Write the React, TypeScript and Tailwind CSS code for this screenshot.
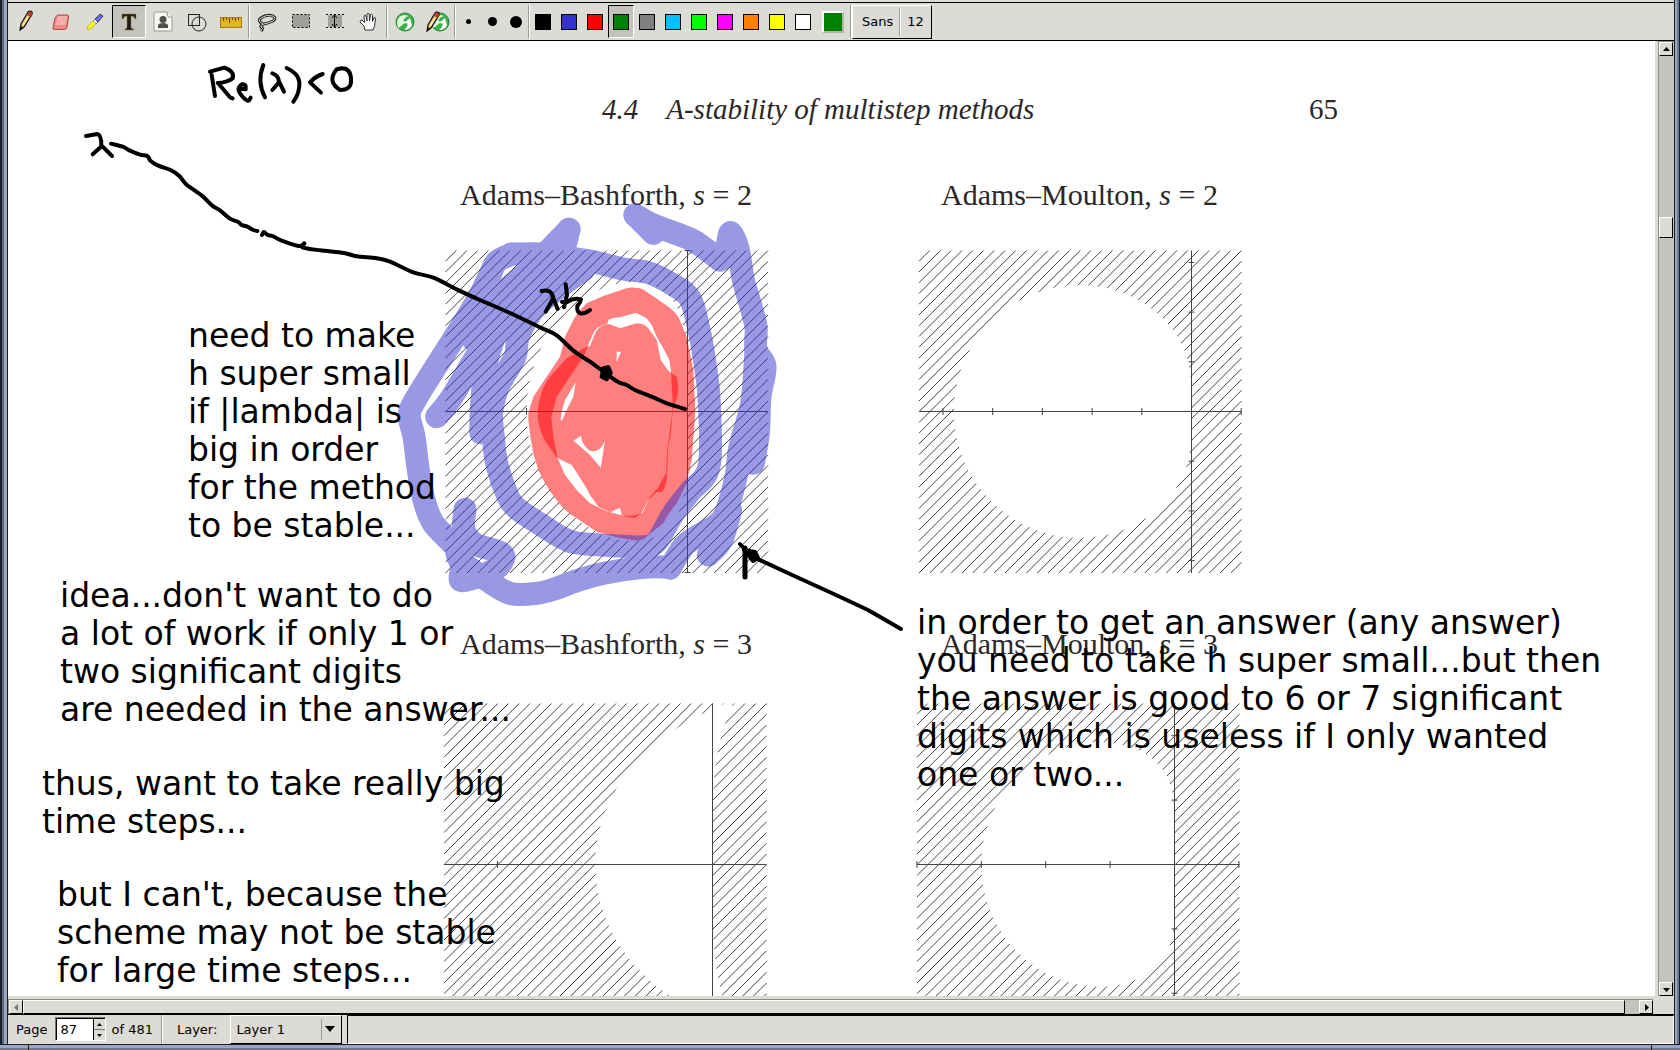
import React from "react";

type Pt = [number, number];

const mul = (a: Pt, b: Pt): Pt => [a[0] * b[0] - a[1] * b[1], a[0] * b[1] + a[1] * b[0]];
const div = (a: Pt, b: Pt): Pt => {
  const d = b[0] * b[0] + b[1] * b[1];
  return [(a[0] * b[0] + a[1] * b[1]) / d, (a[1] * b[0] - a[0] * b[1]) / d];
};
const poly = (c: number[], w: Pt): Pt =>
  c.reduce<Pt>((acc, k) => {
    const m = mul(acc, w);
    return [m[0] + k, m[1]];
  }, [0, 0]);

/* Boundary locus rho(w)/sigma(w) of a linear multistep method, |w| = 1. */
function locus(rho: number[], sigma: number[], ox: number, oy: number, unit: number) {
  const pts: string[] = [];
  for (let i = 0; i < 360; i++) {
    const t = (i * Math.PI) / 180;
    const w: Pt = [Math.cos(t), Math.sin(t)];
    const z = div(poly(rho, w), poly(sigma, w));
    pts.push(`${(ox + z[0] * unit).toFixed(2)},${(oy - z[1] * unit).toFixed(2)}`);
  }
  return pts.join(" ");
}

interface PlotProps {
  id: string;
  x: number;
  y: number;
  ox: number;
  oy: number;
  unit: number;
  curveUnit?: number;
  rho: number[];
  sigma: number[];
  xt: number[];
  yt: number[];
}

function Plot({ id, x, y, ox, oy, unit, curveUnit = unit, rho, sigma, xt, yt }: PlotProps) {
  const size = 322.5;
  const step = size / 30;
  const lines = Array.from({ length: 59 }, (_, i) => (i + 1) * step);
  return (
    <g stroke="#444" strokeWidth="1">
      <clipPath id={id}>
        <rect x={x} y={y - 1} width={size} height={size + 1} />
      </clipPath>
      {lines.map((s) => {
        const a = Math.min(s, size);
        const b = Math.max(0, s - size);
        return <line key={s} x1={x + b} y1={y + a} x2={x + a} y2={y + b} />;
      })}
      <polygon points={locus(rho, sigma, ox, oy, curveUnit)} fill="#fff" stroke="none" clipPath={`url(#${id})`} />
      <path d={`M${x} ${oy}h${size}M${ox} ${y}v${size}`} />
      {xt.map((t) => (
        <path key={t} d={`M${ox + t * unit} ${oy - 3.5}v7`} />
      ))}
      {yt.map((t) => (
        <path key={t} d={`M${ox - 3} ${oy - t * unit}h6`} />
      ))}
    </g>
  );
}

/* A pen stroke: a smooth curve through every listed point. */
function Ink({ pts }: { pts: string }) {
  const p = pts.split(" ").map((s) => s.split(",").map(Number) as Pt);
  let d = `M${p[0][0]} ${p[0][1]}`;
  for (let i = 0; i < p.length - 1; i++) {
    const a = p[Math.max(0, i - 1)];
    const b = p[i];
    const c = p[i + 1];
    const e = p[Math.min(p.length - 1, i + 2)];
    d += `C${b[0] + (c[0] - a[0]) / 6} ${b[1] + (c[1] - a[1]) / 6} ${c[0] - (e[0] - b[0]) / 6} ${c[1] - (e[1] - b[1]) / 6} ${c[0]} ${c[1]}`;
  }
  return <path d={d} />;
}

function Drawing() {
  return (
    <svg className="absolute left-0 top-0" width="1648" height="1000" viewBox="8 41 1648 1000" aria-hidden="true">
      <Plot id="ab2" x={445.5} y={250.5} ox={687.5} oy={411.5} unit={161} rho={[1, -1, 0]} sigma={[1.5, -0.5]} xt={[-1]} yt={[1, -1]} />
      <Plot id="am2" x={919} y={250.5} ox={1191.5} oy={411.5} unit={49.7} curveUnit={39.6} rho={[1, -1, 0]} sigma={[5 / 12, 8 / 12, -1 / 12]} xt={[-5, -4, -3, -2, -1, 1]} yt={[3, 2, 1, -1, -2, -3]} />
      <Plot id="ab3" x={444} y={703.5} ox={712.5} oy={864.5} unit={215} rho={[1, -1, 0, 0]} sigma={[23 / 12, -16 / 12, 5 / 12]} xt={[-1]} yt={[]} />
      <Plot id="am3" x={917} y={703.5} ox={1174.5} oy={864.5} unit={64.4} rho={[1, -1, 0, 0]} sigma={[9 / 24, 19 / 24, -5 / 24, 1 / 24]} xt={[-4, -3, -2, -1, 1]} yt={[2, 1, -1, -2]} />

      <g transform="translate(390 170) scale(0.33333)">
        <g fill="#f00" fillOpacity="0.5">
          <path
            fillRule="evenodd"
            d="M735 353Q715 350 700 358L640 378 590 400Q560 430 550 450L525 500 510 560Q490 590 470 620L430 680 415 730V750Q420 800 430 850L445 900 460 930Q475 960 500 990Q525 1025 560 1045L620 1085 680 1102 740 1112Q765 1110 775 1095L820 1060Q835 1030 860 1000L890 940 905 870 915 740V700L910 600 890 500 865 440Q845 415 820 400L770 365Q755 353 735 353ZM738 428L690 442Q670 440 655 450L652 462Q630 465 615 480L605 500 595 525Q585 555 575 568L540 620 500 680 484 740 490 800 503 865 525 915 560 960 600 1000 650 1024 700 1037H730L758 1028 780 980 805 952 828 910 832 840 845 740 848 700 843 604 838 570 820 535 800 500 785 465 770 445Z"
          />
          <path
            fillRule="evenodd"
            d="M590 530L600 528 617 485Q635 460 660 463L690 475 740 460Q765 462 775 475L800 510 812 570 835 602 860 620Q868 650 862 680L848 720 843 790 835 830 832 900Q830 955 815 966H800L775 990 755 1028 735 1044 710 1040 695 1036 690 1013 660 1027 625 1010 600 975 590 955 555 900 545 885 510 868 500 862 470 820Q445 780 443 740L445 705Q455 650 480 620L530 565ZM557 637L525 690Q512 730 512 753Q520 750 525 730L550 680ZM550 812L573 797Q575 825 600 842Q630 850 645 812L632 893 600 855 570 829ZM680 545H693L680 577Z"
          />
        </g>
        <g fill="none" stroke="#3333cc" strokeWidth="69" strokeLinecap="round" strokeLinejoin="round" opacity="0.5">
          <Ink pts="537,178 510,260 430,330 350,430 310,510 285,600 275,700 272,788" />
          <Ink pts="537,178 480,237 420,300 330,380 250,510" />
          <Ink pts="365,252 320,275 300,315 265,385 195,500 125,610 70,700 58,740 72,800 85,900 102,990 130,1060 195,1130 210,1170 290,1230 360,1270 440,1270 500,1255 560,1232 650,1208 760,1192 830,1191" />
          <Ink pts="365,252 450,252 520,262 600,273 700,297 775,308 850,345 900,385 925,470 945,580 958,700 957,890 900,965 850,1030 800,1115 760,1130 690,1128 570,1120 520,1105 450,1062 380,1015 350,970 320,880 310,800 305,730 325,650 375,560 385,500 430,420 510,350 580,300" />
          <Ink pts="310,475 240,590 180,690 140,740" />
          <Ink pts="735,135 790,190" />
          <Ink pts="735,135 790,165 900,207 950,240 990,270" />
          <Ink pts="990,270 1010,230 1022,188 1045,240 1060,330 1080,400 1098,470 1098,540 1125,590 1110,680 1105,790 1090,880" />
          <Ink pts="1098,540 1085,700 1050,830 1038,920 1010,1020 985,1060 920,1100 880,1130 840,1195" />
          <Ink pts="1105,720 1090,800 1050,870" />
          <Ink pts="1022,1020 995,1110 955,1155" />
          <Ink pts="225,1018 222,1080 255,1122 335,1150 330,1185 290,1210 215,1232 215,1190 200,1145" />
        </g>
        <g fill="none" stroke="#000" strokeWidth="12" strokeLinecap="round" strokeLinejoin="round">
          <path d="M455 363Q485 355 490 385L503 417M488 388L467 425M527 343L531 375 522 412M516 396L530 397Q550 382 573 388Q572 398 562 408Q560 425 570 430Q585 432 600 420" />
          <path d="M640 595L635 620 650 628 662 608 655 592Z" fill="#000" />
        </g>
      </g>

      <g transform="translate(60 50) scale(0.33333)" fill="none" stroke="#000" strokeWidth="12" strokeLinecap="round" strokeLinejoin="round">
        <path d="M450 65L493 53Q525 65 518 85Q500 98 473 99M455 75L465 138M474 99L510 142 518 145" />
        <path d="M537 115L557 118Q560 100 545 103Q528 115 540 130Q560 158 568 150L572 143" />
        <path d="M610 45Q590 95 615 142M637 70Q655 75 657 95L672 125M656 98L637 120M680 54Q715 70 718 95Q720 130 700 155M788 72Q765 80 750 97L783 128" />
        <path d="M830 58Q800 95 840 120Q875 120 873 90Q873 55 845 55Z" />
        <path d="M78 258L112 252Q125 255 124 290M123 290L98 313M128 290L156 318" />
        <Ink pts="153,281 188,290 210,302 240,314 262,318 272,333 295,347 332,360 358,378 380,404 425,436 457,467 480,481 510,506 535,516 545,525 562,530 580,540 592,543" />
        <Ink pts="606,555 612,546 623,555 640,559 665,572 717,588 733,580 728,592 780,601 852,609 890,619 950,625 990,635 1060,667 1120,683 1190,718 1260,750 1350,789 1440,832 1490,856 1540,902 1590,935 1638,970 1675,996 1700,1005 1725,1020 1780,1042 1825,1062 1875,1077" />
      </g>
      <g fill="none" stroke="#000" strokeWidth="4" strokeLinecap="round" strokeLinejoin="round">
        <path d="M740 544L751 556 790 574 836 595 868 610 901 629M745 549V577" />
        <path d="M744 550L755 552 758 558 753 561Z" fill="#000" />
        <path d="M745 548V577" strokeWidth="5" />
      </g>
    </svg>
  );
}

function PencilShape() {
  return (
    <g>
      <path d="M5 20L6 14 13 2Q15 0 17 2Q18 4 16 6L9 17Z" fill="#e8b85c" stroke="#111" strokeWidth="1.2" />
      <path d="M12 5L16 7 17 4 15 1.5Z" fill="#c4362a" />
      <path d="M8 15L13 7" stroke="#fff0be" strokeWidth="1.5" />
      <path d="M5 20L6 16 8 18Z" fill="#111" />
    </g>
  );
}

function RefreshShape() {
  return (
    <g>
      <circle cx="12" cy="12" r="9" fill="#3db04a" stroke="#1b8a30" strokeWidth="1" />
      <path d="M4 12Q5 5 12 5L16 6Q11 7 10.500 11L13 12 5.500 18Q4 15 4 12Z" fill="#dff5dc" />
      <path d="M11 13L17 8 19 15Q17 20 11 20Q15 17 14.500 13.500Z" fill="#fff" />
    </g>
  );
}

const I = ({ children }: { children: React.ReactNode }) => (
  <svg width="24" height="24" viewBox="0 0 24 24" fill="none" aria-hidden="true">
    {children}
  </svg>
);

const tools: { label: string; icon: React.ReactNode; on?: boolean }[] = [
  { label: "Pen", icon: <PencilShape /> },
  {
    label: "Eraser",
    icon: (
      <g>
        <path d="M8.500 5H18Q20 5 19.500 7L18 17Q17.500 19.500 15.500 19.500H5.500Q3.500 19.500 4 17.500L6 8Z" fill="#e98a88" stroke="#b04444" strokeWidth="1" />
        <path d="M9 6H18.500L16.500 15H6.500Z" fill="#f7adab" />
      </g>
    ),
  },
  {
    label: "Highlighter",
    icon: (
      <g>
        <path d="M4 20L5 16 11 10 14 13 8 18Z" fill="#ffff00" stroke="#aaa500" strokeWidth=".6" />
        <path d="M10 11L12 9 15 12 13 14Z" fill="#fff" stroke="#555" strokeWidth=".6" />
        <path d="M12 9L17 4 20 6 15 12Z" fill="#6b70ee" stroke="#223" strokeWidth=".8" />
      </g>
    ),
  },
  { label: "Text", on: true, icon: <path d="M5 4H19V9H18Q17.500 6 14 6V17Q14 19 16.500 19V20H8V19Q10 19 10 17V6Q6.500 6 6 9H5Z" fill="#1c1c14" stroke="#8c8048" strokeWidth=".5" /> },
  {
    label: "Image",
    icon: (
      <g>
        <path d="M4 2H16L21 7V21H3V3Z" fill="#f6f6f4" stroke="#999" />
        <path d="M16 2L17 7 21 7" fill="#fff" stroke="#999" />
        <circle cx="12" cy="9.500" r="3.500" fill="#4e504c" />
        <path d="M7 18V15Q8 13 12 13Q16 13 17 15V18Z" fill="#4e504c" />
      </g>
    ),
  },
  {
    label: "Shape recognizer",
    icon: (
      <g stroke="#222">
        <rect x="3.500" y="4.500" width="11" height="11" />
        <circle cx="14" cy="14" r="7" />
      </g>
    ),
  },
  {
    label: "Ruler",
    icon: (
      <g>
        <rect x="1.500" y="7.500" width="21" height="10" fill="#e2b324" stroke="#a07c12" />
        <path d="M4.500 8V11M7.500 8V10M10.500 8V13M13.500 8V10M16.500 8V11M19.500 8V10" stroke="#5a4508" />
      </g>
    ),
  },
];

const selectTools: { label: string; icon: React.ReactNode }[] = [
  {
    label: "Select region",
    icon: (
      <g>
        <path d="M8 14Q2 11 6 8Q11 4 18 6Q22 8 18 11Q14 13 9 14Q5 15 6 17Q9 18 6 21" stroke="#222" strokeWidth="3" />
        <path d="M8 14Q2 11 6 8Q11 4 18 6Q22 8 18 11Q14 13 9 14Q5 15 6 17Q9 18 6 21" stroke="#ddd" strokeWidth="1" />
      </g>
    ),
  },
  { label: "Select rectangle", icon: <rect x="3.500" y="4.500" width="17" height="13" fill="#a09f9b" stroke="#000" strokeDasharray="2 2" /> },
  {
    label: "Vertical space",
    icon: (
      <g>
        <rect x="5" y="5" width="14" height="12" fill="#a09f9b" />
        <path d="M3 4.500H21M3 17.500H21" stroke="#000" strokeDasharray="2 2" />
        <path d="M11.500 5V17M9 8L11.500 5 14 8M9 14L11.500 17 14 14" stroke="#000" />
      </g>
    ),
  },
  {
    label: "Hand tool",
    icon: <path d="M8 20L7 16 3 12Q3 10 5 10L7.500 12.500 7 6Q7.500 4.500 9 6L10 11 10 4Q11 2.500 12.200 4L12.500 11 13.500 4.500Q15 3.500 15.500 5.500V11.500L17 7.500Q18.500 7 18.500 9L17.500 16 16 20Z" fill="#fff" stroke="#333" />,
  },
];

const swatches: [string, string][] = [
  ["Black", "bg-black"],
  ["Blue", "bg-[#3333cc]"],
  ["Red", "bg-[#ff0000]"],
  ["Green", "bg-[#008000]"],
  ["Gray", "bg-[#808080]"],
  ["Light blue", "bg-[#00c0ff]"],
  ["Light green", "bg-[#00ff00]"],
  ["Magenta", "bg-[#ff00ff]"],
  ["Orange", "bg-[#ff8000]"],
  ["Yellow", "bg-[#ffff00]"],
  ["White", "bg-white"],
];

const raised = "border border-t-white border-l-white border-r-black border-b-black bg-[#dcdbd5]";
const pressed = "border border-t-black border-l-black border-r-white border-b-white bg-[#c4c2bd]";

const Sep = () => <span className="h-[33px] w-[2px] shrink-0 border-l border-[#9c9a90] bg-white" />;

function Toolbar() {
  return (
    <div role="toolbar" aria-label="Tools" className="flex h-[39px] shrink-0 items-center overflow-hidden border-y border-black bg-[#dcdbd5] pl-[2px]">
      {tools.map((t) => (
        <button key={t.label} aria-label={t.label} className={`flex h-[33px] w-[34px] shrink-0 items-center justify-center ${t.on ? pressed : ""}`}>
          <I>{t.icon}</I>
        </button>
      ))}
      <Sep />
      {selectTools.map((t) => (
        <button key={t.label} aria-label={t.label} className="flex h-[33px] w-[34px] shrink-0 items-center justify-center">
          <I>{t.icon}</I>
        </button>
      ))}
      <Sep />
      <button aria-label="Default tool" className="flex h-[33px] w-[33px] shrink-0 items-center justify-center">
        <I><RefreshShape /></I>
      </button>
      <button aria-label="Default pen" className="flex h-[33px] w-[33px] shrink-0 items-center justify-center">
        <I>
          <g transform="translate(2 0)"><RefreshShape /></g>
          <g transform="translate(-4 1)"><PencilShape /></g>
        </I>
      </button>
      <Sep />
      <button aria-label="Fine" className="flex h-[33px] w-6 shrink-0 items-center justify-center"><span className="size-[5px] rounded-full bg-black" /></button>
      <button aria-label="Medium" className="flex h-[33px] w-6 shrink-0 items-center justify-center"><span className="size-[9px] rounded-full bg-black" /></button>
      <button aria-label="Thick" className="flex h-[33px] w-6 shrink-0 items-center justify-center"><span className="size-3 rounded-full bg-black" /></button>
      <Sep />
      {swatches.map(([name, bg]) => (
        <button key={name} aria-label={name} className={`flex h-[33px] w-[26px] shrink-0 items-center justify-center ${name === "Green" ? pressed : ""}`}>
          <span className={`size-4 border border-black ${bg}`} />
        </button>
      ))}
      <button aria-label="Custom color" className="ml-[6px] size-[22px] shrink-0 border-2 border-t-white border-l-white border-r-[#b5b3ab] border-b-[#b5b3ab] bg-[#008000]" />
      <span className="ml-[6px]" />
      <Sep />
      <button className={`flex h-[34px] w-[80px] shrink-0 items-center pl-[9px] ${raised}`}>
        <span>Sans</span>
        <span className="mx-[6px] h-7 w-[2px] border-l border-[#9c9a90] bg-white" />
        <span>12</span>
      </button>
    </div>
  );
}

const arrows = {
  up: "M1 6L4.500 2 8 6Z",
  down: "M1 3L4.500 7 8 3Z",
  left: "M6 1L2 4.500 6 8Z",
  right: "M3 1L7 4.500 3 8Z",
};

const Arrow = ({ dir, color = "#000" }: { dir: keyof typeof arrows; color?: string }) => (
  <svg className="shrink-0" width="9" height="9" viewBox="0 0 9 9" aria-hidden="true"><path d={arrows[dir]} fill={color} /></svg>
);

const Note = ({ at, lines }: { at: string; lines: string[] }) => (
  <p className={`absolute whitespace-pre text-[33px] leading-[38px] ${at}`}>{lines.join("\n")}</p>
);

const Caption = ({ at, name, s }: { at: string; name: string; s: number }) => (
  <figcaption className={`absolute whitespace-nowrap font-['Liberation_Serif',serif] text-[30px] leading-8 text-[#2b2728] ${at}`}>
    {name}, <i>s</i> = {s}
  </figcaption>
);

export default function App() {
  return (
    <div className="flex h-screen w-full flex-col overflow-hidden bg-[#dcdbd5] font-['DejaVu_Sans',sans-serif] text-[13px] text-black">
      <div className="flex min-h-0 flex-1">
        <div className="w-2 shrink-0 border-l-2 border-r border-[#1b1e26] bg-linear-to-r from-[#5c6a80] from-50% to-[#9aa8be] to-50%" />
        <div className="flex min-w-0 flex-1 flex-col pt-[2px]">
          <Toolbar />
          <div className="flex min-h-0 flex-1">
            <main className="relative min-w-0 flex-1 overflow-hidden bg-white">
              <h1 className="absolute left-[594px] top-[52px] flex gap-7 whitespace-nowrap font-['Liberation_Serif',serif] text-[29px] italic leading-8 text-[#2b2728]">
                <span>4.4</span>
                <span>A-stability of multistep methods</span>
              </h1>
              <span className="absolute left-[1301px] top-[52px] font-['Liberation_Serif',serif] text-[29px] leading-8 text-[#2b2728]">65</span>
              <Caption at="left-[452px] top-[138px]" name="Adams–Bashforth" s={2} />
              <Caption at="left-[933px] top-[138px]" name="Adams–Moulton" s={2} />
              <Caption at="left-[452px] top-[587px]" name="Adams–Bashforth" s={3} />
              <Caption at="left-[933px] top-[587px]" name="Adams–Moulton" s={3} />
              <Drawing />
              <Note at="left-[180px] top-[276px]" lines={["need to make", "h super small", "if |lambda| is", "big in order", "for the method", "to be stable..."]} />
              <Note at="left-[52px] top-[536px]" lines={["idea...don't want to do", "a lot of work if only 1 or", "two significant digits", "are needed in the answer..."]} />
              <Note at="left-[34px] top-[724px]" lines={["thus, want to take really big", "time steps..."]} />
              <Note at="left-[49px] top-[835px]" lines={["but I can't, because the", "scheme may not be stable", "for large time steps..."]} />
              <Note at="left-[909px] top-[563px]" lines={["in order to get an answer (any answer)", "you need to take h super small...but then", "the answer is good to 6 or 7 significant", "digits which is useless if I only wanted", "one or two..."]} />
            </main>
            <div className="ml-[3px] flex w-4 shrink-0 flex-col border-l border-t border-[#8d8b84] bg-[#c5c3bd] pr-px">
              <button aria-label="Scroll up" className={`flex size-[14px] shrink-0 items-center justify-center ${raised}`}><Arrow dir="up" /></button>
              <div className="flex-[161]" />
              <div className={`h-[21px] w-[14px] shrink-0 ${raised}`} />
              <div className="flex-[745]" />
              <button aria-label="Scroll down" className={`flex size-[14px] shrink-0 items-center justify-center ${raised}`}><Arrow dir="down" /></button>
            </div>
          </div>
          <div className="mr-[21px] mt-[3px] flex h-[15px] shrink-0 border-l border-t border-[#8d8b84] bg-[#c5c3bd]">
            <button aria-label="Scroll left" className={`flex size-[14px] shrink-0 items-center justify-center ${raised}`}><Arrow dir="left" color="#77756e" /></button>
            <div className={`h-[14px] flex-1 ${raised}`} />
            <div className="w-[14px]" />
            <button aria-label="Scroll right" className={`flex size-[14px] shrink-0 items-center justify-center ${raised}`}><Arrow dir="right" /></button>
          </div>
          <div className="flex h-[30px] shrink-0 items-stretch border-t border-t-black bg-[#dcdbd5] pl-2">
            <label htmlFor="page" className="self-center">Page</label>
            <div className="ml-2 mt-[2px] flex h-6 w-[51px] border border-t-[#77756e] border-l-[#77756e] border-r-white border-b-white">
              <input id="page" defaultValue="87" className="w-[37px] min-w-0 border-l border-t border-black bg-white pl-[3px] text-[13px] outline-none" />
              <span className="flex w-3 flex-col border-l border-t border-black">
                <button aria-label="Next page" className="flex flex-1 items-center justify-center border-b border-[#77756e]"><svg width="5" height="3" viewBox="0 0 5 3"><path d="M0 3L2.500 0 5 3Z" /></svg></button>
                <button aria-label="Previous page" className="flex flex-1 items-center justify-center"><svg width="5" height="3" viewBox="0 0 5 3"><path d="M0 0L2.500 3 5 0Z" /></svg></button>
              </span>
            </div>
            <span className="ml-[5px] self-center">of 481</span>
            <span className="ml-2 h-full w-[2px] border-l border-[#9c9a90] bg-white" />
            <label htmlFor="layer" className="ml-[14px] self-center">Layer:</label>
            <div className="relative ml-[13px] w-[112px]">
              <select id="layer" className={`h-[29px] w-full appearance-none pl-[5px] text-[13px] ${raised}`}>
                <option>Layer 1</option>
              </select>
              <span className="pointer-events-none absolute inset-y-1 right-[6px] flex w-[15px] items-center justify-end border-l border-[#9c9a90]">
                <svg width="12" height="7" viewBox="0 0 12 7"><path d="M1 0H11L6 6Z" /></svg>
              </span>
            </div>
            <div className="ml-[5px] flex-1 border border-t-black border-l-black border-r-white border-b-white" />
          </div>
        </div>
        <div className="w-[6px] shrink-0 border-x border-[#1b1e26] bg-linear-to-r from-[#9aa8be] from-50% to-[#6a7991] to-50%" />
      </div>
      <div className="h-[6px] shrink-0 border-t border-[#1b1e26] bg-linear-to-b from-[#9aa8be] from-50% to-[#6a7991] to-50%">
        <div className="mx-7 h-full border-x border-[#1b1e26]" />
      </div>
    </div>
  );
}
